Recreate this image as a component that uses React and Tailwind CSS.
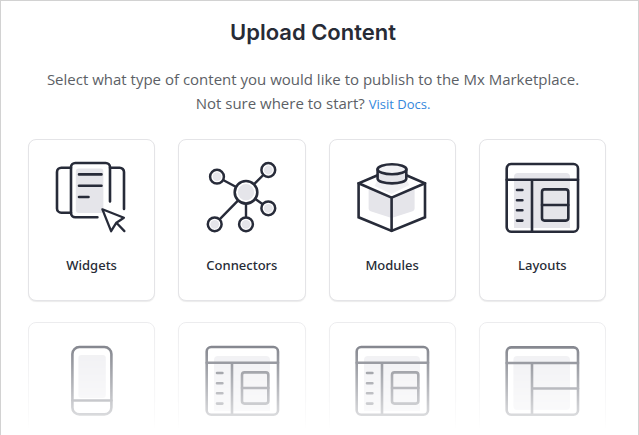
import React from "react";

const INK = "#272b39";
const TINT = "#e5e5ea";

function Icon({ children }) {
  return (
    <svg
      aria-hidden="true"
      width="80"
      height="76"
      viewBox="0 0 80 76"
      fill="none"
      stroke={INK}
      strokeWidth="2.6"
      strokeLinecap="round"
      strokeLinejoin="round"
      className="shrink-0"
    >
      {children}
    </svg>
  );
}

function WidgetsIcon() {
  return (
    <Icon>
      <rect x="23.8" y="8.5" width="27.6" height="44.5" rx="3" fill={TINT} stroke="none" />
      <path d="M19 7.7H9.3A4.3 4.3 0 0 0 5 12v36.4a4.3 4.3 0 0 0 4.3 4.3H19" />
      <path d="M45.4 57.3H23.3A4.3 4.3 0 0 1 19 53V7.3A4.3 4.3 0 0 1 23.3 3h30.4A4.3 4.3 0 0 1 58 7.3V41.5" />
      <path d="M58 7.7h9.7A4.3 4.3 0 0 1 72 12v37" />
      <path d="M27 14.4h22.5M27 25.7h22.5M27 37h9.5" />
      <path d="M50.4 49.3l21.5 8.4-7.5 5-5.3 8.5zM64.4 62.7l8 8.4" strokeWidth="2.3" />
    </Icon>
  );
}

function ConnectorsIcon() {
  const nodes = [
    [66.3, 10],
    [15, 16.7],
    [66.3, 48.3],
    [12.7, 64.3],
    [44, 64.3],
  ];
  return (
    <Icon>
      {nodes.map(([x, y]) => (
        <path key={`l${x}-${y}`} d={`M44 32.3L${x} ${y}`} strokeWidth="2.4" />
      ))}
      {nodes.map(([x, y]) => (
        <g key={`n${x}-${y}`}>
          <circle cx={x} cy={y} r="6.9" fill="#fff" strokeWidth="2.5" />
          <circle cx={x} cy={y} r="4.4" fill={TINT} stroke="none" />
        </g>
      ))}
      <circle cx="44" cy="32.3" r="11.3" fill="#fff" />
      <circle cx="44" cy="32.3" r="8.2" fill={TINT} stroke="none" />
    </Icon>
  );
}

function ModulesIcon() {
  return (
    <Icon>
      <path d="M16.6 28l23 9.7 23-9.7v20.5a3 3 0 0 1-2 2.8L39.6 58l-21-6.7a3 3 0 0 1-2-2.8z" fill={TINT} stroke="none" />
      <path d="M25.6 20h28.7l3 5-17.7 9-17-8z" fill="#f0f0f3" stroke="none" />
      <path d="M25.6 15.2L6.6 23.3v34l33 13.6L73 57.3v-34l-18.7-8.1" strokeLinejoin="miter" />
      <path d="M6.6 23.3l33 14.4L73 23.3M39.6 37.7v33" strokeLinejoin="miter" />
      <path d="M25.6 9.3v9.5c0 2.6 6.4 4.6 14.4 4.6s14.3-2 14.3-4.6V9.3" fill={TINT} />
      <ellipse cx="40" cy="9.3" rx="14.4" ry="5" fill="#f2f2f5" />
    </Icon>
  );
}

function LayoutsIcon() {
  return (
    <Icon>
      <path d="M12 68V17a4 4 0 0 1 4-4H64a4 4 0 0 1 4 4v51z" fill={TINT} stroke="none" />
      <rect x="40" y="29.4" width="26.3" height="31.2" rx="2.5" />
      <path d="M40 45h26.3M4.7 19.7H76M30 19.7v52" />
      <rect x="4.7" y="4" width="71.3" height="67.7" rx="4.5" />
      <path d="M15 30h5.4M15 40.3h5.4M15 50.3h5.4M15 60.6h5.4" />
    </Icon>
  );
}

function PhoneIcon() {
  return (
    <Icon>
      <rect x="26.4" y="12" width="27.4" height="43" rx="3" fill={TINT} stroke="none" />
      <rect x="20.4" y="4" width="39" height="67.4" rx="7" />
      <path d="M20.4 57.5h39" />
    </Icon>
  );
}

function PageIcon() {
  return (
    <Icon>
      <rect x="11.4" y="13" width="56.6" height="54" rx="4" fill={TINT} stroke="none" />
      <path d="M4.7 20H76M30 20v51.7M30 45.5h46" />
      <rect x="4.7" y="4.4" width="71.3" height="67.3" rx="4.5" />
    </Icon>
  );
}

const types = [
  { label: "Widgets", icon: WidgetsIcon },
  { label: "Connectors", icon: ConnectorsIcon },
  { label: "Modules", icon: ModulesIcon },
  { label: "Layouts", icon: LayoutsIcon },
];

const moreTypes = [PhoneIcon, LayoutsIcon, LayoutsIcon, PageIcon];

const cardClass =
  "flex h-[162px] flex-col items-center rounded-lg border border-[#e4e4e7] bg-white pt-5 shadow-[0_1px_1px_rgba(0,0,0,0.08)]";

export default function App() {
  return (
    <main className="flex h-screen flex-col overflow-hidden border-x border-t border-[#d2d2d2] bg-white pr-8 pl-[27px] font-['Open_Sans','Noto_Sans',sans-serif]">
      <header className="pt-[15px] pr-2 text-center">
        <h1 className="font-[Inter,sans-serif] text-[22px] leading-8 font-semibold text-[#272b36]">
          Upload Content
        </h1>
        <p className="mt-[19px] text-[15px] leading-6 text-[#5c5f66]">
          Select what type of content you would like to publish to the Mx Marketplace.
          <br />
          Not sure where to start?{" "}
          <a href="#docs" className="text-[13px] text-[#3487dc]">
            Visit Docs.
          </a>
        </p>
      </header>

      <section className="mt-[23px] grid shrink-0 grid-cols-4 gap-x-[23px]">
        {types.map(({ label, icon: Glyph }) => (
          <button key={label} type="button" className={cardClass}>
            <Glyph />
            <span className="mt-[19px] font-['Noto_Sans',sans-serif] text-[13px] leading-5 font-medium text-[#272b36]">
              {label}
            </span>
          </button>
        ))}
      </section>

      <section className="mt-[21px] grid min-h-0 flex-1 grid-cols-4 gap-x-[23px] overflow-hidden [mask-image:linear-gradient(to_bottom,rgba(0,0,0,0.7)_0px,rgba(0,0,0,0.18)_92px,transparent_108px)]">
        {moreTypes.map((Glyph, i) => (
          <button key={i} type="button" className={cardClass}>
            <Glyph />
          </button>
        ))}
      </section>
    </main>
  );
}
